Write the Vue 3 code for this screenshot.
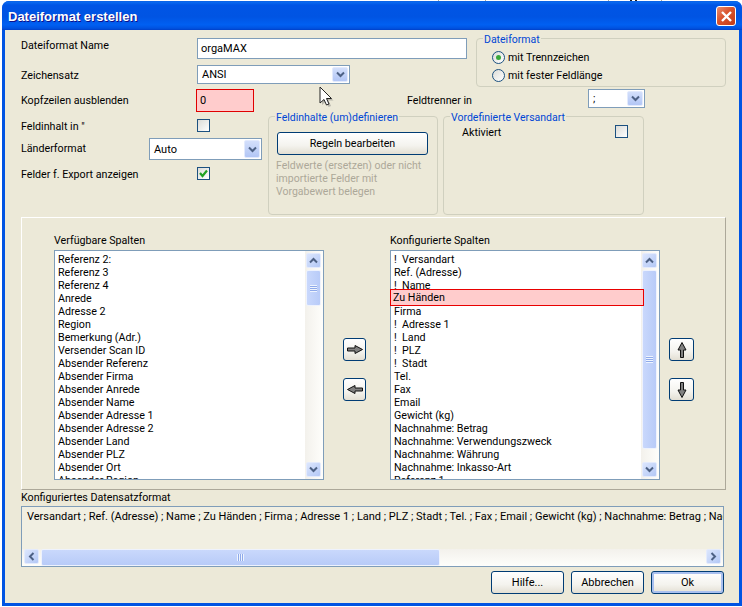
<template>
  <div class="screen">
    <div class="behind"></div>
    <div class="window">
      <div class="titlebar">
        <span class="title">Dateiformat erstellen</span>
        <button class="close">
          <svg width="13" height="13" viewBox="0 0 13 13">
            <path d="M2 2 L11 11 M11 2 L2 11" stroke="#fff" stroke-width="2.4" />
          </svg>
        </button>
      </div>

      <div class="body">
        <div class="upper">
          <div class="upper-left">
            <div class="row">
              <label class="lbl lbl-name">Dateiformat Name</label>
              <input class="input name-input" value="orgaMAX" />
            </div>
            <div class="row row-charset">
              <label class="lbl lbl-charset">Zeichensatz</label>
              <div class="combo combo-charset">
                <span class="combo-text">ANSI</span>
                <span class="combo-btn">
                  <svg width="9" height="7" viewBox="0 0 9 7"><path d="M1 1.5 L4.5 5 L8 1.5" fill="none" stroke="#4d6185" stroke-width="2" /></svg>
                </span>
              </div>
            </div>
          </div>
          <div class="group group-format">
            <span class="group-title">Dateiformat</span>
            <div class="radio-row">
              <span class="radio"><span class="radio-dot"></span></span>
              <span>mit Trennzeichen</span>
            </div>
            <div class="radio-row">
              <span class="radio"></span>
              <span>mit fester Feldlänge</span>
            </div>
          </div>
        </div>

        <div class="row row-header">
          <label class="lbl lbl-header">Kopfzeilen ausblenden</label>
          <input class="input error-input" value="0" />
          <label class="lbl lbl-sep">Feldtrenner in</label>
          <div class="combo combo-sep">
            <span class="combo-text">;</span>
            <span class="combo-btn">
              <svg width="9" height="7" viewBox="0 0 9 7"><path d="M1 1.5 L4.5 5 L8 1.5" fill="none" stroke="#4d6185" stroke-width="2" /></svg>
            </span>
          </div>
        </div>

        <div class="lower">
          <div class="lower-left">
            <div class="row row-quote">
              <label class="lbl lbl-check">Feldinhalt in "</label>
              <span class="check"></span>
            </div>
            <div class="row row-country">
              <label class="lbl lbl-country">Länderformat</label>
              <div class="combo combo-country">
                <span class="combo-text">Auto</span>
                <span class="combo-btn">
                  <svg width="9" height="7" viewBox="0 0 9 7"><path d="M1 1.5 L4.5 5 L8 1.5" fill="none" stroke="#4d6185" stroke-width="2" /></svg>
                </span>
              </div>
            </div>
            <div class="row row-export">
              <label class="lbl lbl-check">Felder f. Export anzeigen</label>
              <span class="check">
                <svg width="11" height="11" viewBox="0 0 11 11"><path d="M2 5 L4.5 8 L9 2.5" fill="none" stroke="#21a121" stroke-width="2.2" /></svg>
              </span>
            </div>
          </div>

          <div class="group group-rules">
            <span class="group-title">Feldinhalte (um)definieren</span>
            <button class="btn btn-rules">Regeln bearbeiten</button>
            <p class="hint">Feldwerte (ersetzen) oder nicht<br />importierte Felder mit<br />Vorgabewert belegen</p>
          </div>

          <div class="group group-ship">
            <span class="group-title">Vordefinierte Versandart</span>
            <div class="ship-row">
              <span class="ship-label">Aktiviert</span>
              <span class="check"></span>
            </div>
          </div>
        </div>

        <div class="panel">
          <div class="col">
            <div class="col-title">{{ lists[0].title }}</div>
            <div class="list">
              <div class="list-items">
                <div v-for="item in lists[0].items" :key="item" class="item">{{ item }}</div>
              </div>
              <div class="vscroll">
                <span class="sb-btn">
                  <svg width="9" height="7" viewBox="0 0 9 7"><path d="M1 5.5 L4.5 2 L8 5.5" fill="none" stroke="#4d6185" stroke-width="2" /></svg>
                </span>
                <span class="sb-thumb" :style="{ height: lists[0].thumb + 'px' }">
                  <span class="grip"></span>
                </span>
                <span class="sb-rest"></span>
                <span class="sb-btn">
                  <svg width="9" height="7" viewBox="0 0 9 7"><path d="M1 1.5 L4.5 5 L8 1.5" fill="none" stroke="#4d6185" stroke-width="2" /></svg>
                </span>
              </div>
            </div>
          </div>

          <div class="move-col">
            <button class="btn arrow-btn">
              <svg width="16" height="9" viewBox="0 0 16 9"><path d="M0.5 3 H8 V0.5 L15.5 4.5 L8 8.5 V6 H0.5 Z" fill="#808080" stroke="#111" /></svg>
            </button>
            <button class="btn arrow-btn">
              <svg width="16" height="9" viewBox="0 0 16 9"><path d="M15.5 3 H8 V0.5 L0.5 4.5 L8 8.5 V6 H15.5 Z" fill="#808080" stroke="#111" /></svg>
            </button>
          </div>

          <div class="col">
            <div class="col-title">{{ lists[1].title }}</div>
            <div class="list">
              <div class="list-items">
                <div v-for="item in lists[1].items" :key="item" class="item">{{ item }}</div>
              </div>
              <div class="vscroll">
                <span class="sb-btn">
                  <svg width="9" height="7" viewBox="0 0 9 7"><path d="M1 5.5 L4.5 2 L8 5.5" fill="none" stroke="#4d6185" stroke-width="2" /></svg>
                </span>
                <span class="sb-thumb" :style="{ height: lists[1].thumb + 'px' }">
                  <span class="grip"></span>
                </span>
                <span class="sb-rest"></span>
                <span class="sb-btn">
                  <svg width="9" height="7" viewBox="0 0 9 7"><path d="M1 1.5 L4.5 5 L8 1.5" fill="none" stroke="#4d6185" stroke-width="2" /></svg>
                </span>
              </div>
              <div class="marked">Zu Händen</div>
            </div>
          </div>

          <div class="order-col">
            <button class="btn order-btn">
              <svg width="10" height="16" viewBox="0 0 10 16"><path d="M3.5 15.5 V8 H1 L5 0.5 L9 8 H6.5 V15.5 Z" fill="#808080" stroke="#111" /></svg>
            </button>
            <button class="btn order-btn">
              <svg width="10" height="16" viewBox="0 0 10 16"><path d="M3.5 0.5 V8 H1 L5 15.5 L9 8 H6.5 V0.5 Z" fill="#808080" stroke="#111" /></svg>
            </button>
          </div>
        </div>

        <div class="format-title">Konfiguriertes Datensatzformat</div>
        <div class="format-box">
          <div class="format-text">{{ formatText }}</div>
          <div class="hscroll">
            <span class="sb-btn">
              <svg width="7" height="9" viewBox="0 0 7 9"><path d="M5.5 1 L2 4.5 L5.5 8" fill="none" stroke="#4d6185" stroke-width="2" /></svg>
            </span>
            <span class="hthumb"><span class="hgrip"></span></span>
            <span class="sb-rest"></span>
            <span class="sb-btn">
              <svg width="7" height="9" viewBox="0 0 7 9"><path d="M1.5 1 L5 4.5 L1.5 8" fill="none" stroke="#4d6185" stroke-width="2" /></svg>
            </span>
          </div>
        </div>

        <div class="footer">
          <button class="btn foot-btn">Hilfe...</button>
          <button class="btn foot-btn">Abbrechen</button>
          <button class="btn foot-btn foot-default">Ok</button>
        </div>
      </div>

      <svg class="cursor" width="16" height="22" viewBox="0 0 16 22">
        <path d="M3 3 L3 19 L7 15.5 L9.5 21 L12 20 L9.5 14.5 L14.5 14.5 Z" fill="#777" opacity="0.45" />
        <path d="M1 1 L1 17 L5 13.5 L7.5 19 L10 18 L7.5 12.5 L12.5 12.5 Z" fill="#fff" stroke="#222" />
      </svg>
    </div>
  </div>
</template>

<script setup>
const lists = [
  {
    title: "Verfügbare Spalten",
    thumb: 36,
    items: [
      "Referenz 2:", "Referenz 3", "Referenz 4", "Anrede", "Adresse 2", "Region",
      "Bemerkung (Adr.)", "Versender Scan ID", "Absender Referenz", "Absender Firma",
      "Absender Anrede", "Absender Name", "Absender Adresse 1", "Absender Adresse 2",
      "Absender Land", "Absender PLZ", "Absender Ort", "Absender Region",
    ],
  },
  {
    title: "Konfigurierte Spalten",
    thumb: 179,
    items: [
      "!  Versandart", "Ref. (Adresse)", "!  Name", "Zu Händen", "Firma", "!  Adresse 1",
      "!  Land", "!  PLZ", "!  Stadt", "Tel.", "Fax", "Email", "Gewicht (kg)",
      "Nachnahme: Betrag", "Nachnahme: Verwendungszweck", "Nachnahme: Währung",
      "Nachnahme: Inkasso-Art", "Referenz 1",
    ],
  },
];

const formatText =
  "Versandart ; Ref. (Adresse) ; Name ; Zu Händen ; Firma ; Adresse 1 ; Land ; PLZ ; Stadt ; Tel. ; Fax ; Email ; Gewicht (kg) ; Nachnahme: Betrag ; Nachnahme: Verwendungszweck";
</script>

<style>
html,
body {
  background: #fff;
}
</style>

<style scoped>
.behind {
  height: 1px;
  /* edges of the window lying behind the dialog */
  background: linear-gradient(90deg,
    #fff 438px, #aca899 438px 439px, #fff 439px 485px, #aca899 485px 486px,
    #fff 486px 608px, #aca899 608px 609px, #fff 609px 630px, #222 630px 632px,
    #fff 632px 635px, #222 635px 637px, #fff 637px 661px, #aca899 661px 662px, #fff 662px);
}
.window {
  position: relative;
  box-sizing: border-box;
  width: 740px;
  height: 605px;
  margin-left: 2px;
  border-radius: 7px 7px 0 0;
  background: #0054e3;
  padding: 0 3px 3px;
  display: flex;
  flex-direction: column;
  font-family: Roboto, "Liberation Sans", sans-serif;
  font-size: 10.7px;
  line-height: 13px;
  color: #000;
}
.titlebar {
  box-sizing: border-box;
  height: 29px;
  margin: 0 -3px;
  padding: 2px 6px 0;
  border-radius: 7px 7px 0 0;
  display: flex;
  align-items: center;
  justify-content: space-between;
  background: linear-gradient(180deg, #0a5fe0 0, #0a6af0 4%, #0055e5 14%, #0054e3 55%, #0060f2 82%, #0052e0 94%, #0040c8 100%);
}
.title {
  color: #fff;
  font-family: "Liberation Sans", sans-serif;
  font-weight: bold;
  font-size: 13px;
  text-shadow: 1px 1px #0f1089;
}
.close {
  width: 20px;
  height: 20px;
  padding: 0;
  margin-top: -1px;
  display: flex;
  align-items: center;
  justify-content: center;
  border: 1px solid #fff;
  border-radius: 3px;
  background: linear-gradient(135deg, #ea8d6e 0, #d9532d 45%, #c23a17 100%);
}
.body {
  flex: 1;
  background: #ece9d8;
  padding-left: 16px;
  min-height: 0;
}
.row {
  display: flex;
  align-items: flex-start;
}
.input {
  box-sizing: border-box;
  border: 1px solid #7f9db9;
  background: #fff;
  margin: 0;
  padding: 0 3px;
  font: inherit;
  font-size: 11px;
  color: #000;
  outline: none;
}

.upper {
  display: flex;
  padding-top: 8px;
}
.upper-left {
  width: 446px;
}
.lbl {
  display: block;
}
.lbl-name {
  width: 176px;
  margin-top: 1px;
}
.name-input {
  width: 270px;
  height: 21px;
}
.row-charset {
  margin-top: 6px;
}
.lbl-charset {
  width: 176px;
  margin-top: 4px;
}
.combo {
  box-sizing: border-box;
  border: 1px solid #7f9db9;
  background: #fff;
  display: flex;
  align-items: center;
  justify-content: space-between;
  padding: 1px 1px 1px 4px;
}
.combo-text {
  font-size: 11px;
}
.combo-btn {
  box-sizing: border-box;
  align-self: stretch;
  width: 16px;
  display: flex;
  align-items: center;
  justify-content: center;
  border: 1px solid #e2eafd;
  border-radius: 2px;
  background: linear-gradient(180deg, #d3dffb, #b2c6f5);
}
.combo-charset {
  width: 153px;
  height: 19px;
}
.combo-sep {
  width: 57px;
  height: 19px;
  margin-left: 103px;
}
.combo-country {
  width: 113px;
  height: 22px;
}

.group {
  position: relative;
  box-sizing: border-box;
  border: 1px solid #d0d0bf;
  border-radius: 4px;
}
.group-title {
  position: absolute;
  top: -6px;
  left: 6px;
  padding: 0 1px;
  background: #ece9d8;
  color: #0046d5;
  white-space: nowrap;
  font-size: 10.5px;
}
.group-format {
  width: 250px;
  height: 49px;
  margin-left: 9px;
  padding: 12px 0 0 15px;
}
.radio-row {
  display: flex;
  align-items: center;
  gap: 3px;
  height: 13px;
  margin-bottom: 5px;
}
.radio {
  box-sizing: border-box;
  width: 13px;
  height: 13px;
  border: 1px solid #1c5180;
  border-radius: 50%;
  background: linear-gradient(135deg, #dcdcd7, #fff);
  display: flex;
  align-items: center;
  justify-content: center;
}
.radio-dot {
  width: 5px;
  height: 5px;
  border-radius: 50%;
  background: #3aa83a;
}

.row-header {
  margin-top: 2px;
}
.lbl-header {
  width: 175px;
  margin-top: 5px;
}
.error-input {
  width: 58px;
  height: 23px;
  border: 1px solid #e00000;
  background: #ffcccc;
}
.lbl-sep {
  width: 78px;
  margin-left: 153px;
  margin-top: 5px;
  white-space: nowrap;
}

.lower {
  display: flex;
  margin-top: 4px;
}
.lower-left {
  width: 247px;
}
.lbl-check {
  width: 176px;
  margin-top: 1px;
}
.check {
  box-sizing: border-box;
  width: 13px;
  height: 13px;
  border: 1px solid #1c5180;
  background: linear-gradient(135deg, #dcdcd7, #fff);
  display: flex;
  align-items: center;
  justify-content: center;
  flex-shrink: 0;
}
.row-quote {
  height: 13px;
  margin-top: 3px;
}
.row-country {
  margin-top: 6px;
}
.lbl-country {
  width: 128px;
  margin-top: 4px;
}
.row-export {
  height: 13px;
  margin-top: 7px;
}
.group-rules {
  width: 170px;
  height: 99px;
  padding: 15px 8px 0 8px;
}
.group-ship {
  width: 201px;
  height: 99px;
  margin-left: 5px;
}
.ship-row {
  display: flex;
  justify-content: space-between;
  padding: 8px 15px 0 18px;
}
.ship-label {
  margin-top: 1px;
}
.btn {
  box-sizing: border-box;
  padding: 0;
  border: 1px solid #003c74;
  border-radius: 3px;
  background: linear-gradient(180deg, #fff 0, #f4f3ee 60%, #e3dfd3 100%);
  font: inherit;
  color: #000;
  display: flex;
  align-items: center;
  justify-content: center;
}
.btn-rules {
  width: 151px;
  height: 23px;
}
.hint {
  margin: 4px 0 0 -1px;
  color: #aca899;
  font-size: 10.5px;
  white-space: nowrap;
}

.panel {
  box-sizing: border-box;
  width: 705px;
  height: 273px;
  margin-top: 2px;
  padding: 16px 0 0 32px;
  border: 1px solid;
  border-color: #fff #aca899 #aca899 #fff;
  display: flex;
}
.col {
  width: 270px;
}
.col-title {
  height: 16px;
}
.list {
  position: relative;
  box-sizing: border-box;
  width: 270px;
  height: 230px;
  border: 1px solid #7f9db9;
  background: #fff;
  display: flex;
}
.list-items {
  flex: 1;
  padding: 2px 0 0 3px;
  overflow: hidden;
}
.item {
  height: 13px;
  white-space: pre;
}
.vscroll {
  box-sizing: border-box;
  width: 18px;
  padding: 2px 2px 2px 1px;
  display: flex;
  flex-direction: column;
  align-items: stretch;
  background: linear-gradient(90deg, #f3f1ec, #fefefb);
}
.sb-btn {
  box-sizing: border-box;
  width: 15px;
  height: 15px;
  flex-shrink: 0;
  display: flex;
  align-items: center;
  justify-content: center;
  border: 1px solid #e4ebfd;
  border-radius: 2px;
  background: linear-gradient(135deg, #dce6fd, #b3c8f6);
}
.sb-thumb {
  box-sizing: border-box;
  margin-top: 2px;
  width: 15px;
  flex-shrink: 0;
  display: flex;
  align-items: center;
  justify-content: center;
  border: 1px solid #eef2fd;
  border-radius: 2px;
  background: linear-gradient(90deg, #c9d8fc, #b8cbf8);
}
.grip {
  width: 7px;
  height: 7px;
  background: repeating-linear-gradient(180deg, #eef4fe 0 1px, #8faaea 1px 2px);
}
.sb-rest {
  flex: 1;
}
.marked {
  position: absolute;
  left: -1px;
  top: 38px;
  box-sizing: border-box;
  width: 254px;
  height: 17px;
  border: 1px solid #e80000;
  background: #ffcccc;
  padding: 1px 0 0 2px;
}
.move-col {
  width: 66px;
  padding-top: 104px;
  padding-left: 19px;
  box-sizing: border-box;
  display: flex;
  flex-direction: column;
  gap: 17px;
}
.arrow-btn {
  width: 23px;
  height: 23px;
}
.order-col {
  padding: 104px 0 0 9px;
  display: flex;
  flex-direction: column;
  gap: 17px;
}
.order-btn {
  width: 25px;
  height: 23px;
}

.format-title {
  margin-top: 1px;
  height: 15px;
}
.format-box {
  box-sizing: border-box;
  width: 703px;
  height: 61px;
  border: 1px solid #7f9db9;
  background: #f1efe2;
  display: flex;
  flex-direction: column;
  justify-content: space-between;
}
.format-text {
  padding: 3px 0 0 5px;
  overflow: hidden;
  white-space: nowrap;
  font-size: 11px;
}
.hscroll {
  height: 17px;
  box-sizing: border-box;
  padding: 0 2px;
  display: flex;
  background: linear-gradient(180deg, #f3f1ec, #fefefb);
}
.hthumb {
  box-sizing: border-box;
  width: 399px;
  margin-left: 2px;
  border: 1px solid #eef2fd;
  border-radius: 2px;
  background: linear-gradient(180deg, #c9d8fc, #b8cbf8);
  display: flex;
  align-items: center;
  justify-content: center;
}
.hgrip {
  width: 7px;
  height: 7px;
  background: repeating-linear-gradient(90deg, #eef4fe 0 1px, #8faaea 1px 2px);
}
.footer {
  display: flex;
  justify-content: flex-end;
  gap: 7px;
  width: 703px;
  margin-top: 4px;
}
.foot-btn {
  width: 73px;
  height: 23px;
  font-size: 11px;
}
.foot-default {
  box-shadow: inset 0 0 0 2px #a9c0ef;
}
.cursor {
  position: absolute;
  left: 317px;
  top: 85px;
}
</style>
